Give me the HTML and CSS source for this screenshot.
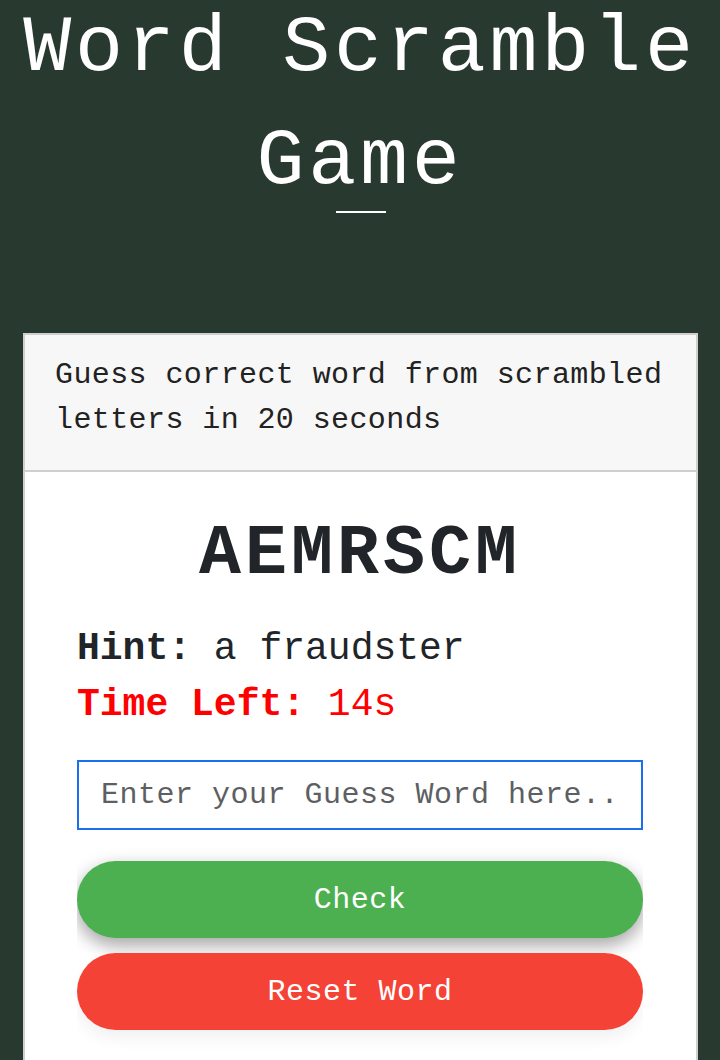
FILE: index.html
```html
<!DOCTYPE html>
<html lang="en">
<head>
<meta charset="utf-8">
<title>Word Scramble Game</title>
<link rel="stylesheet" href="styles.css">
</head>
<body>
<main class="page">
  <h1 class="title">Word Scramble Game</h1>
  <div class="title-rule"></div>
  <section class="card">
    <div class="card-header">Guess correct word from scrambled letters in 20 seconds</div>
    <div class="card-body">
      <div class="scrambled">AEMRSCM</div>
      <div class="info">
        <p class="hint"><b>Hint:</b> a fraudster</p>
        <p class="time"><b>Time Left:</b> 14s</p>
      </div>
      <input class="guess" type="text" placeholder="Enter your Guess Word here..">
      <div class="actions">
        <button class="btn btn-check">Check</button>
        <button class="btn btn-reset">Reset Word</button>
      </div>
    </div>
  </section>
</main>
</body>
</html>
```

FILE: styles.css
```css
html, body {
  margin: 0;
  padding: 0;
  background: #283930;
  font-family: "Liberation Mono", "DejaVu Sans Mono", monospace;
}

.page {
  padding: 0 22px 0 23px;
}

.title {
  margin: -8px -22px 0 -23px;
  color: #ffffff;
  font-weight: 400;
  font-size: 80px;
  line-height: 113px;
  letter-spacing: 3.8px;
  text-align: center;
}

.title-rule {
  width: 50px;
  height: 2px;
  background: #ffffff;
  margin: -7px auto 0;
}

.card {
  margin-top: 120px;
  background: #ffffff;
  border: 2px solid #cfcfcf;
}

.card-header {
  background: #f7f7f7;
  border-bottom: 2px solid #cfcfcf;
  padding: 18px 30px 27px;
  font-size: 30px;
  line-height: 45px;
  letter-spacing: 0.4px;
  color: #222;
}

.card-body {
  padding: 43px 53px 40px 52px;
}

.scrambled {
  text-align: center;
  font-size: 70px;
  font-weight: 700;
  line-height: 80px;
  letter-spacing: 4px;
  color: #212529;
}

.info {
  margin-top: 26px;
}

.info p {
  margin: 0;
  font-size: 38px;
  line-height: 56px;
}

.hint {
  color: #212529;
}

.time {
  color: #ff0000;
}

.guess {
  display: block;
  box-sizing: border-box;
  width: 100%;
  height: 70px;
  margin-top: 27px;
  padding: 0 22px;
  border: 2px solid #1a6ff0;
  outline: none;
  background: #fff;
  font-family: "Liberation Mono", "DejaVu Sans Mono", monospace;
  font-size: 30px;
  letter-spacing: 0.5px;
  color: #212529;
}

.guess::placeholder {
  color: #5d5f63;
}

.actions {
  margin-top: 10px;
  padding: 21px 0 40px;
  overflow: hidden;
  display: flex;
  flex-direction: column;
  gap: 15px;
}

.btn {
  display: block;
  width: 100%;
  height: 77px;
  border: none;
  border-radius: 40px;
  color: #ffffff;
  font-family: "Liberation Mono", "DejaVu Sans Mono", monospace;
  font-size: 30px;
  letter-spacing: 0.5px;
  box-shadow: 0 8px 16px 0 rgba(0, 0, 0, 0.2), 0 6px 20px 0 rgba(0, 0, 0, 0.19);
}

.btn-check {
  background: #4caf50;
}

.btn-reset {
  background: #f44336;
  box-shadow: 0 8px 16px 0 rgba(0, 0, 0, 0.06);
}
```
